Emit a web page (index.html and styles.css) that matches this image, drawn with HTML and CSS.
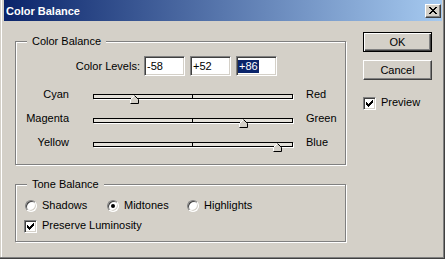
FILE: index.html
```html
<!DOCTYPE html>
<html>
<head>
<meta charset="utf-8">
<link rel="stylesheet" href="styles.css">
</head>
<body>
<div class="window">
  <div class="titlebar">
    <span class="title">Color Balance</span>
    <div class="close">
      <svg width="8" height="7" viewBox="0 0 8 7"><path d="M0 0h2v1h-2z M6 0h2v1h-2z M1 1h2v1h-2z M5 1h2v1h-2z M2 2h4v1h-4z M3 3h2v1h-2z M2 4h4v1h-4z M1 5h2v1h-2z M5 5h2v1h-2z M0 6h2v1h-2z M6 6h2v1h-2z" fill="#000"/></svg>
    </div>
  </div>
  <div class="client">
    <div class="left">
      <div class="group g1">
        <span class="legend">Color Balance</span>
        <div class="levels">
          <span class="levels-label">Color Levels:</span>
          <div class="edit">-58</div>
          <div class="edit">+52</div>
          <div class="edit edit-sel"><span class="sel">+86</span></div>
        </div>
        <div class="srow first">
          <span class="sl">Cyan</span>
          <div class="track"><span class="thumb" style="left:36px"><svg width="10" height="9" viewBox="0 0 10 9"><path d="M0.5 8.5V4.5L4.5 0.5L8.5 4.5V8.5Z" fill="#d4d0c8"/><path d="M0.5 8.5V4.5L4.5 0.5" fill="none" stroke="#fff"/><path d="M4.5 0.5L8.5 4.5V8.5H0.5" fill="none" stroke="#000"/></svg></span></div>
          <span class="sr">Red</span>
        </div>
        <div class="srow">
          <span class="sl">Magenta</span>
          <div class="track"><span class="thumb" style="left:145px"><svg width="10" height="9" viewBox="0 0 10 9"><path d="M0.5 8.5V4.5L4.5 0.5L8.5 4.5V8.5Z" fill="#d4d0c8"/><path d="M0.5 8.5V4.5L4.5 0.5" fill="none" stroke="#fff"/><path d="M4.5 0.5L8.5 4.5V8.5H0.5" fill="none" stroke="#000"/></svg></span></div>
          <span class="sr">Green</span>
        </div>
        <div class="srow">
          <span class="sl">Yellow</span>
          <div class="track"><span class="thumb" style="left:179px"><svg width="10" height="9" viewBox="0 0 10 9"><path d="M0.5 8.5V4.5L4.5 0.5L8.5 4.5V8.5Z" fill="#d4d0c8"/><path d="M0.5 8.5V4.5L4.5 0.5" fill="none" stroke="#fff"/><path d="M4.5 0.5L8.5 4.5V8.5H0.5" fill="none" stroke="#000"/></svg></span></div>
          <span class="sr">Blue</span>
        </div>
      </div>
      <div class="group g2">
        <span class="legend">Tone Balance</span>
        <div class="radios">
          <div class="ritem w1"><span class="radio"></span>Shadows</div>
          <div class="ritem w2"><span class="radio on"></span>Midtones</div>
          <div class="ritem"><span class="radio"></span>Highlights</div>
        </div>
        <div class="crow">
          <span class="cb"><svg width="9" height="9" viewBox="0 0 9 9"><path d="M1 3H2V4H3V5H4V4H5V3H6V2H7V1H8V4H7V5H6V6H5V7H4V8H3V7H2V6H1Z" fill="#000"/></svg></span>Preserve Luminosity
        </div>
      </div>
    </div>
    <div class="right">
      <div class="btn default">OK</div>
      <div class="btn normal">Cancel</div>
      <div class="crow preview">
        <span class="cb"><svg width="9" height="9" viewBox="0 0 9 9"><path d="M1 3H2V4H3V5H4V4H5V3H6V2H7V1H8V4H7V5H6V6H5V7H4V8H3V7H2V6H1Z" fill="#000"/></svg></span>Preview
      </div>
    </div>
  </div>
</div>
</body>
</html>
```
FILE: styles.css
```css
body {
  margin: 0;
  background: #d4d0c8;
}

.window {
  width: 445px;
  height: 259px;
  box-sizing: border-box;
  background: #d4d0c8;
  border-right: 1px solid #404040;
  border-bottom: 1px solid #404040;
  box-shadow: inset -1px -1px #808080, inset 1px 0 #d4d0c8, inset 2px 0 #fff;
  padding: 0 2px 2px 4px;
  font: 11px/13px "Liberation Sans", Arial, sans-serif;
  color: #000;
}

.titlebar {
  height: 21px;
  background: linear-gradient(to right, #0a246a, #a6caf0);
  display: flex;
  justify-content: space-between;
  align-items: flex-start;
  padding: 0 1px 0 2px;
}

.title {
  color: #fff;
  font-weight: bold;
  margin-top: 5px;
}

.close {
  width: 16px;
  height: 14px;
  margin-top: 4px;
  box-sizing: border-box;
  background: #d4d0c8;
  border: 1px solid;
  border-color: #fff #404040 #404040 #fff;
  box-shadow: inset -1px -1px #808080;
  display: flex;
  align-items: center;
  justify-content: center;
}

.close svg {
  display: block;
  margin: 0 1px 1px 0;
}

.client {
  display: flex;
  padding: 11px 0 0 11px;
}

.left {
  width: 331px;
  margin-top: 9px;
}

.group {
  position: relative;
  border: 1px solid #808080;
  box-shadow: inset 1px 1px #fff, 1px 1px #fff;
}

.legend {
  position: absolute;
  top: -7px;
  left: 11px;
  padding: 0 5px;
  background: #d4d0c8;
}

.g1 {
  padding: 14px 0 15px 0;
}

.levels {
  display: flex;
  align-items: center;
}

.levels-label {
  width: 124px;
  margin-right: 4px;
  text-align: right;
}

.edit {
  width: 41px;
  height: 20px;
  box-sizing: border-box;
  background: #fff;
  border: 1px solid;
  border-color: #808080 #fff #fff #808080;
  box-shadow: inset 1px 1px #404040, inset -1px -1px #d4d0c8;
  padding-left: 2px;
  margin-right: 5px;
  display: flex;
  align-items: center;
}

.edit-sel {
  padding-left: 1px;
}

.sel {
  background: #0a246a;
  color: #fff;
  padding: 0 1px 0 1px;
}

.srow {
  display: flex;
  align-items: flex-start;
  height: 13px;
  margin-top: 11px;
}

.srow.first {
  margin-top: 12px;
}

.sl {
  width: 53px;
  text-align: right;
}

.track {
  position: relative;
  width: 200px;
  height: 5px;
  box-sizing: border-box;
  margin: 6px 0 0 24px;
  border: 1px solid #000;
  box-shadow: 1px 1px #fff;
  background: linear-gradient(#000, #000) no-repeat 98px 0 / 1px 100%, #e4e1da;
}

.thumb {
  position: absolute;
  top: 0;
  width: 10px;
  height: 9px;
}

.thumb svg {
  display: block;
}

.sr {
  margin-left: 13px;
}

.g2 {
  margin-top: 19px;
  padding: 14px 0 9px 9px;
}

.radios {
  display: flex;
  height: 13px;
}

.ritem {
  display: flex;
  align-items: flex-start;
  gap: 5px;
}

.w1 {
  width: 82px;
}

.w2 {
  width: 80px;
}

.radio {
  width: 12px;
  height: 12px;
  margin-top: 1px;
  box-sizing: border-box;
  border-radius: 50%;
  background: #fff;
  border: 1px solid;
  border-color: #808080 #fff #fff #808080;
  box-shadow: inset 1px 1px #404040, inset -1px -1px #d4d0c8;
  display: flex;
  align-items: center;
  justify-content: center;
}

.radio.on::after {
  content: "";
  width: 4px;
  height: 4px;
  border-radius: 50%;
  background: #000;
}

.crow {
  display: flex;
  align-items: flex-start;
  gap: 5px;
  height: 13px;
  margin-top: 7px;
  margin-left: -1px;
}

.cb {
  width: 13px;
  height: 13px;
  margin-top: 1px;
  box-sizing: border-box;
  background: #fff;
  border: 1px solid;
  border-color: #808080 #fff #fff #808080;
  box-shadow: inset 1px 1px #404040, inset -1px -1px #d4d0c8;
  display: flex;
  align-items: center;
  justify-content: center;
}

.cb svg {
  display: block;
}

.right {
  width: 69px;
  margin-left: 17px;
  display: flex;
  flex-direction: column;
}

.btn {
  height: 20px;
  box-sizing: border-box;
  display: flex;
  align-items: center;
  justify-content: center;
}

.btn.default {
  border: 1px solid #000;
  box-shadow: inset 1px 1px #fff, inset -1px -1px #404040, inset -2px -2px #808080;
}

.btn.normal {
  margin-top: 8px;
  border: 1px solid;
  border-color: #fff #404040 #404040 #fff;
  box-shadow: inset -1px -1px #808080;
}

.crow.preview {
  margin: 16px 0 0 0;
}
```
